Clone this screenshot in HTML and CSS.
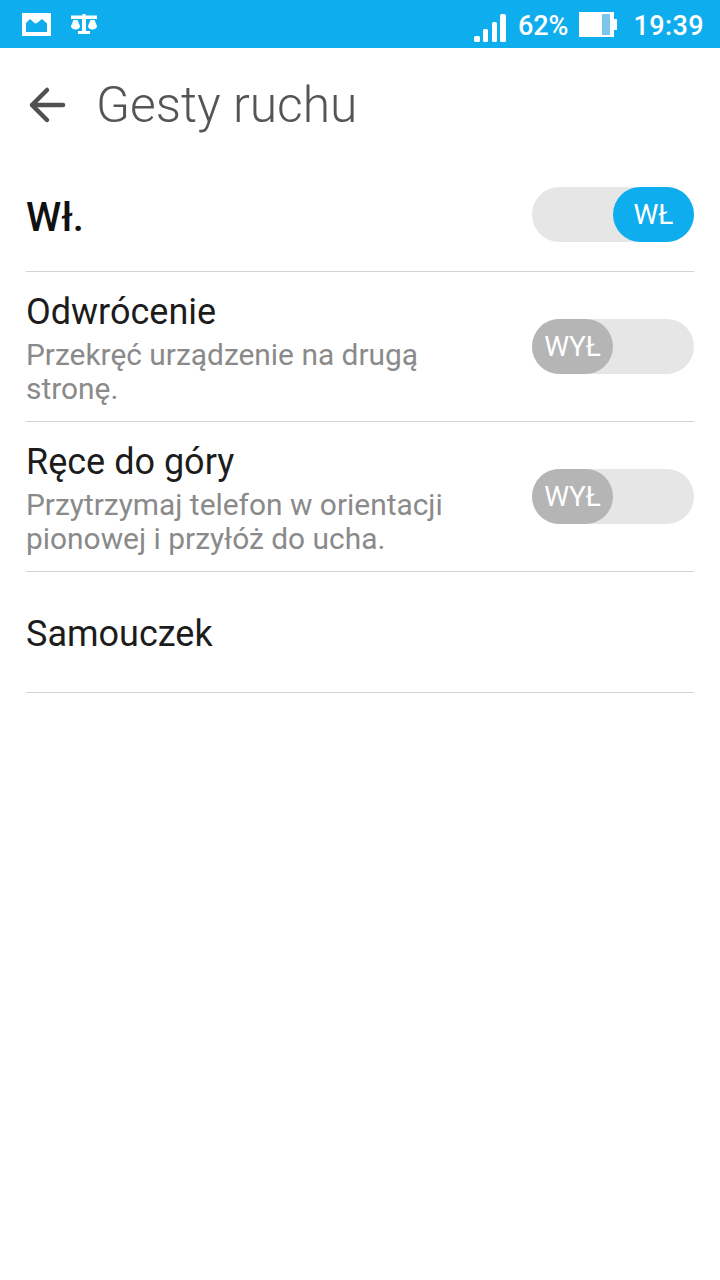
FILE: index.html
```html
<!DOCTYPE html>
<html lang="pl">
<head>
<meta charset="utf-8">
<title>Gesty ruchu</title>
<link rel="stylesheet" href="styles.css">
</head>
<body>
<div class="status">
  <div class="status-left">
    <svg class="ic-photo" width="29" height="23" viewBox="0 0 29 23"><path fill="#fff" fill-rule="evenodd" d="M0 0h29v23H0zM4 19h21V10.500l-5-4.500-5 4-2 .5-5-4.500-4 4z"/></svg>
    <svg class="ic-scale" width="26" height="20" viewBox="0 0 26 20"><path fill="#fff" d="M0 1.500h11.500V0h3v1.500H26V5H15v12h4v3H7v-3h4V5H0z"/><path fill="#fff" d="M2.500 6h4L9 12c0 2-2 3.500-4.500 3.500S0 14 0 12zM19.500 6h4L26 12c0 2-2 3.500-4.500 3.500S17 14 17 12z"/></svg>
  </div>
  <div class="status-right">
    <svg class="ic-signal" width="32" height="28" viewBox="0 0 32 28"><g fill="#fff"><rect x="0" y="22" width="6" height="6" rx="1.500"/><rect x="9" y="15" width="5" height="13" rx="1.500"/><rect x="18" y="8" width="5" height="20" rx="1.500"/><rect x="26" y="0" width="6" height="28" rx="1.500"/></g></svg>
    <span class="pct">62%</span>
    <svg class="ic-batt" width="38" height="25" viewBox="0 0 38 25"><rect x="0" y="0" width="35" height="25" fill="#fff"/><rect x="23" y="2" width="8" height="21" fill="#7cc6ec"/><rect x="35" y="7" width="3" height="11" fill="#fff"/></svg>
    <span class="clock">19:39</span>
  </div>
</div>

<header class="appbar">
  <svg class="ic-back" width="38" height="38" viewBox="0 0 38 38"><path d="M35 19H4M19 4 4 19l15 15" fill="none" stroke="#505050" stroke-width="4.500" stroke-linecap="round" stroke-linejoin="round"/></svg>
  <h1 class="title">Gesty ruchu</h1>
</header>

<main class="list">
  <section class="row row-master">
    <div class="master-label">Wł.</div>
    <div class="switch"><span class="knob knob-on">WŁ</span></div>
  </section>
  <section class="row row-item">
    <div class="text">
      <div class="label">Odwrócenie</div>
      <div class="desc">Przekręć urządzenie na drugą<br>stronę.</div>
    </div>
    <div class="switch switch-off"><span class="knob knob-off">WYŁ</span></div>
  </section>
  <section class="row row-item">
    <div class="text">
      <div class="label">Ręce do góry</div>
      <div class="desc">Przytrzymaj telefon w orientacji<br>pionowej i przyłóż do ucha.</div>
    </div>
    <div class="switch switch-off"><span class="knob knob-off">WYŁ</span></div>
  </section>
  <section class="row row-tutorial">
    <div class="label">Samouczek</div>
  </section>
</main>
</body>
</html>
```

FILE: styles.css
```css
* { box-sizing: border-box; }
html, body { margin: 0; padding: 0; background: #fff; }
body { width: 720px; height: 1280px; overflow: hidden; font-family: Roboto, "Noto Sans", sans-serif; }

.status {
  height: 48px;
  background: #0eaeee;
  display: flex;
  justify-content: space-between;
  align-items: center;
  color: #fff;
  padding: 0 16px 0 22px;
}
.status-left { display: flex; align-items: center; gap: 20px; }
.status-right { display: flex; align-items: center; }
.ic-signal { margin-right: 12px; margin-top: 8px; }
.pct { font-size: 27px; font-weight: 500; margin-right: 11px; margin-top: 4px; }
.ic-batt { margin-right: 16px; margin-top: 1px; }
.clock { font-size: 27px; font-weight: 500; letter-spacing: .4px; margin-top: 4px; }

.appbar {
  height: 112px;
  display: flex;
  align-items: center;
  padding-left: 28px;
}
.ic-back { margin-right: 30px; margin-top: 2px; }
.title {
  margin: 4px 0 0;
  font-size: 49.8px;
  font-weight: 300;
  color: #555;
  line-height: 1;
}

.list { padding: 0 26px; }
.row {
  display: flex;
  justify-content: space-between;
  border-bottom: 1px solid #d2d2d2;
}
.row-master { height: 112px; align-items: center; }
.row-master .switch { margin-top: -3px; }
.row-item { height: 150px; padding-top: 47px; align-items: flex-start; }
.row-tutorial { height: 121px; align-items: center; }
.row-tutorial .label { margin-top: 4px; }

.master-label { font-size: 40px; font-weight: 500; color: #111; margin-top: 4px; }
.text { margin-top: -27px; }
.label { font-size: 36px; color: #1c1c1c; line-height: 40px; }
.desc { font-size: 29.9px; color: #8a8a8a; line-height: 34px; margin-top: 6px; }

.switch {
  width: 162px;
  height: 55px;
  border-radius: 28px;
  background: #e6e6e6;
  display: flex;
  justify-content: flex-end;
  flex: none;
}
.switch-off { justify-content: flex-start; }
.knob {
  width: 81px;
  height: 55px;
  border-radius: 28px;
  display: flex;
  align-items: center;
  justify-content: center;
  color: #fff;
  font-size: 28px;
}
.knob-on { background: #0eaeee; }
.knob-off { background: #b5b5b5; }
```
